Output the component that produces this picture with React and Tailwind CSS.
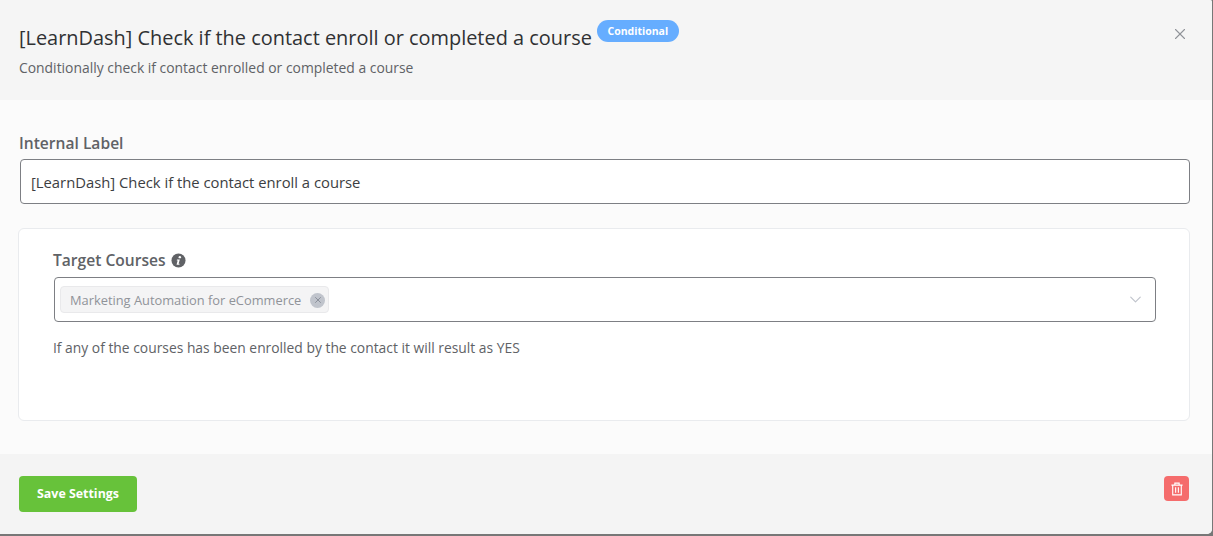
import React from "react";
import { X, ChevronDown } from "lucide-react";

function InfoIcon() {
  return (
    <svg viewBox="0 0 16 16" className="w-[15px] h-[15px]">
      <circle cx="8" cy="8" r="7.5" fill="#606266" />
      <circle cx="9.4" cy="4.4" r="1.3" fill="#fff" />
      <path d="M6.4 7h3l-1.3 4.4h1.1l-.3 1.1H5.9l1.2-4.4H6.1z" fill="#fff" />
    </svg>
  );
}

function TrashIcon() {
  return (
    <svg viewBox="0 0 14 16" className="w-[12px] h-[14px]" fill="none" stroke="#fff" strokeWidth="1.3">
      <path d="M0.5 3.5h13M4.5 3.5V1.2h5v2.3M2 3.5v11.3h10V3.5M5.4 6v6.5M8.6 6v6.5" />
    </svg>
  );
}

export default function App() {
  return (
    <div className="w-[1213px] h-[536px] overflow-hidden bg-[#777777] font-['Open_Sans','Noto_Sans',sans-serif]">
      <div className="w-[1212px] h-[534px] overflow-hidden rounded-br-[5px] rounded-tr-[2px] bg-[#fbfbfb] text-[#606266] flex flex-col">
        <div className="h-[100px] shrink-0 bg-[#f5f5f5] pl-[19px] pr-[23px] pt-[20px] flex justify-between">
          <div>
            <div className="flex items-start">
              <h1 className="text-[19.93px] leading-[34px] pt-px font-medium text-[#303133]">[LearnDash] Check if the contact enroll or completed a course</h1>
              <span className="ml-[5px] h-[22px] w-[82px] rounded-full bg-[#66adff] text-white text-[10.5px] font-bold leading-[22px] text-center">Conditional</span>
            </div>
            <p className="text-[13.9px] leading-[20px] mt-[3px]">Conditionally check if contact enrolled or completed a course</p>
          </div>
          <X className="w-[18px] h-[18px] mt-[5px] text-[#909399]" strokeWidth={1.5} />
        </div>

        <div className="flex-1 pl-[19px] pr-[22px] pt-[32px]">
          <label className="block text-[15.6px] leading-[22px] font-semibold">Internal Label</label>
          <div className="mt-[5px] h-[45px] ml-px border border-[#7d7f84] rounded-[4px] bg-white px-[10px] pt-px flex items-center text-[14.8px] text-[#3c3e42]">[LearnDash] Check if the contact enroll a course</div>

          <div className="mt-[24px] -ml-px h-[193px] bg-white border border-[#e9ebee] rounded-[6px] pl-[34px] pr-[33px] pt-[20px]">
            <div className="flex items-center gap-[5px] text-[15.6px] leading-[22px] font-semibold">
              Target Courses
              <InfoIcon />
            </div>
            <div className="mt-[6px] ml-px h-[45px] border border-[#7d7f84] rounded-[4px] flex items-center justify-between pl-[5px] pr-[10px]">
              <div className="h-[27px] w-[269px] bg-[#f4f4f5] border border-[#e9e9eb] rounded-[4px] pl-[9px] flex items-center gap-[9px] text-[12.85px] text-[#909399]">
                <span className="pt-[2px]">Marketing Automation for eCommerce</span>
                <span className="w-[15px] h-[15px] mt-px rounded-full bg-[#c0c4cc] text-[#808590] flex items-center justify-center"><X className="w-[10px] h-[10px]" /></span>
              </div>
              <ChevronDown className="w-[19px] h-[19px] text-[#c0c4cc]" strokeWidth={1.5} />
            </div>
            <p className="mt-[16px] text-[13.85px] leading-[20px]">If any of the courses has been enrolled by the contact it will result as YES</p>
          </div>
        </div>

        <div className="h-[80px] shrink-0 bg-[#f4f4f4] pl-[19px] pr-[23px] flex justify-between">
          <button className="mt-[22px] w-[118px] h-[36px] rounded-[4px] bg-[#67c23a] text-white text-[12.4px] font-bold">Save Settings</button>
          <button className="mt-[22px] w-[25px] h-[25px] rounded-[4px] bg-[#f56c6c] flex items-center justify-center"><TrashIcon /></button>
        </div>
      </div>
    </div>
  );
}
